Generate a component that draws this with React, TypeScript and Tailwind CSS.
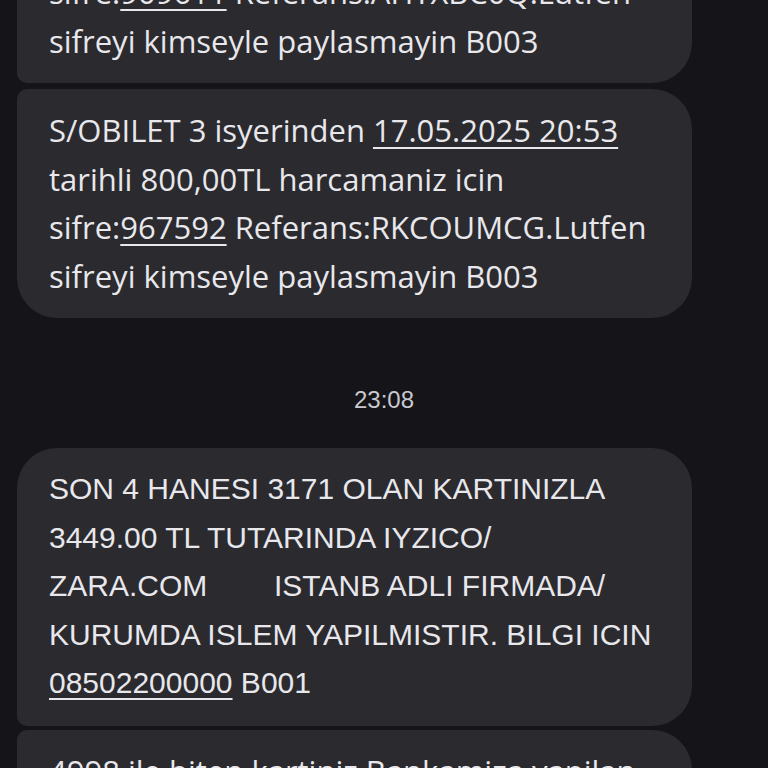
export default function App() {
  const upper = { fontFamily: '"Open Sans", "Noto Sans", sans-serif' }
  const lower = { fontFamily: '"Liberation Sans", Arial, sans-serif' }
  const link = 'underline decoration-2 underline-offset-[5px]'

  return (
    <div className="w-[768px] h-[768px] overflow-hidden bg-[#151519]">
      <div className="flex flex-col mt-[-146px] text-[#e8e7ec] leading-[48.5px]">
        <div className="ml-[17px] w-[675px] bg-[#2a2a2f] rounded-tl-[40px] rounded-tr-[40px] rounded-br-[40px] rounded-bl-[10px] pl-[32px] pt-[17px] pb-[18px] text-[31px]" style={upper}>
          S/OBILET 3 isyerinden <span className={link}>17.05.2025 20:42</span>
          <br />
          tarihli 800,00TL harcamaniz icin
          <br />
          sifre:<span className={link}>909611</span> Referans:AHTXBC0Q.Lutfen
          <br />
          sifreyi kimseyle paylasmayin B003
        </div>
        <div className="ml-[17px] mt-[6px] w-[675px] bg-[#2a2a2f] rounded-tl-[10px] rounded-tr-[40px] rounded-br-[40px] rounded-bl-[40px] pl-[32px] pt-[17px] pb-[18px] text-[31px]" style={upper}>
          S/OBILET 3 isyerinden <span className={link}>17.05.2025 20:53</span>
          <br />
          tarihli 800,00TL harcamaniz icin
          <br />
          sifre:<span className={link}>967592</span> Referans:RKCOUMCG.Lutfen
          <br />
          sifreyi kimseyle paylasmayin B003
        </div>
        <div className="h-[130px] pt-[34px] flex items-center justify-center text-[24px] leading-none text-[#c9c8ce]" style={lower}>
          23:08
        </div>
        <div className="ml-[17px] w-[675px] bg-[#2a2a2f] rounded-tl-[40px] rounded-tr-[40px] rounded-br-[40px] rounded-bl-[10px] pl-[32px] pt-[17px] pb-[18px] text-[30px]" style={lower}>
          SON 4 HANESI 3171 OLAN KARTINIZLA
          <br />
          3449.00 TL TUTARINDA IYZICO/
          <br />
          ZARA.COM&nbsp;&nbsp;&nbsp;&nbsp;&nbsp;&nbsp;&nbsp; ISTANB ADLI FIRMADA/
          <br />
          KURUMDA ISLEM YAPILMISTIR. BILGI ICIN
          <br />
          <span className={link}>08502200000</span> B001
        </div>
        <div className="ml-[17px] mt-[4px] w-[675px] bg-[#2a2a2f] rounded-tl-[10px] rounded-tr-[40px] rounded-br-[40px] rounded-bl-[40px] pl-[32px] pt-[17px] pb-[18px] text-[31px]" style={upper}>
          4998 ile biten kartiniz Bankamiza yapilan
          <br />
          odeme ile ilgili bilgi
        </div>
      </div>
    </div>
  )
}
